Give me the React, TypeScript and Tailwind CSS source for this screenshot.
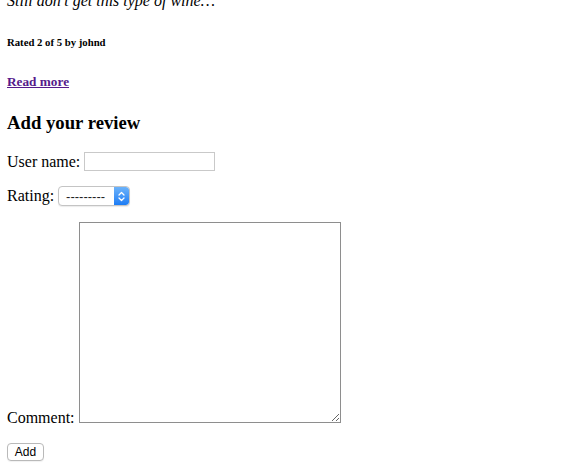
import React from 'react';

function SelectBox() {
  return (
    <div className="inline-flex h-[20px] w-[72px] items-stretch rounded-[4px] border border-[#c4c4c4] bg-white shadow-[0_1px_1px_rgba(0,0,0,0.08)] overflow-hidden align-middle">
      <span className="flex-1 flex items-center pl-[7px] text-[13px] leading-none text-[#222]" style={{ fontFamily: '"Liberation Sans", Arial, sans-serif' }}>
        ---------
      </span>
      <span className="w-[15px] flex items-center justify-center bg-gradient-to-b from-[#6cb3fa] to-[#1a7cf4] rounded-r-[3px]">
        <svg width="7" height="11" viewBox="0 0 7 11" fill="none" stroke="white" strokeWidth="1.3" strokeLinecap="round" strokeLinejoin="round">
          <path d="M1 4 L3.5 1.5 L6 4" />
          <path d="M1 7 L3.5 9.5 L6 7" />
        </svg>
      </span>
    </div>
  );
}

export default function App() {
  return (
    <div className="w-[564px] h-[473px] overflow-hidden bg-white text-black px-[7px]" style={{ fontFamily: '"Liberation Serif", "Times New Roman", serif' }}>
      {/* Previous review, partly scrolled out */}
      <p className="mt-[-8px] text-[16px] italic leading-[18px]">Still don't get this type of wine…</p>
      <h6 className="mt-[26px] text-[10.72px] font-bold leading-[12px]">Rated 2 of 5 by johnd</h6>
      <h5 className="mt-[26px] text-[13.28px] font-bold leading-[15px]">
        <a href="#" className="text-[#551a8b] underline">Read more</a>
      </h5>

      {/* Review form */}
      <h3 className="mt-[23px] text-[18.72px] font-bold leading-[21px]">Add your review</h3>
      <form className="mt-[19px]" onSubmit={(e) => e.preventDefault()}>
        <p className="flex items-center gap-[4px] text-[16px] leading-[18px]">
          <label>User name:</label>
          <input type="text" className="h-[19px] w-[131px] border border-[#c9c9c9] bg-white outline-none" />
        </p>
        <p className="mt-[15px] flex items-center gap-[4px] text-[16px] leading-[18px]">
          <label>Rating:</label>
          <SelectBox />
        </p>
        <p className="mt-[16px] flex items-end gap-[4px] text-[16px] leading-[18px]">
          <label className="mb-[-4px]">Comment:</label>
          <textarea className="h-[201px] w-[262px] border border-[#8e8e8e] bg-white outline-none resize-y block" />
        </p>
        <div className="mt-[16px]">
          <button type="submit" className="h-[18px] w-[37px] rounded-[4px] border border-[#b9b9b9] bg-white text-[12px] leading-none text-black shadow-[0_1px_1px_rgba(0,0,0,0.06)]" style={{ fontFamily: '"Liberation Sans", Arial, sans-serif' }}>
            Add
          </button>
        </div>
      </form>
    </div>
  );
}
